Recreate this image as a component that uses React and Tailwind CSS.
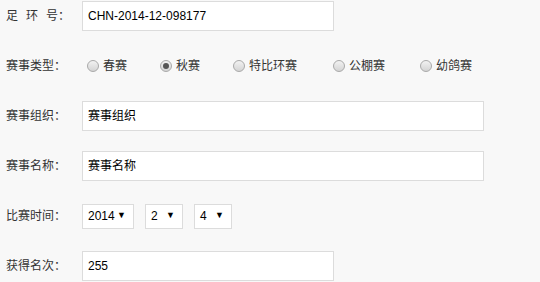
import React from 'react';

const font = { fontFamily: '"Liberation Sans", "Noto Sans CJK SC", sans-serif' };

function Label({ children }) {
  return <div className="w-[82px] shrink-0 pl-[6px] text-[12px] text-[#333]">{children}</div>;
}

function Radio({ checked, label }) {
  return (
    <label className="flex items-center mr-[28px]">
      <span className="ml-[5px] mr-[4px] flex h-[12px] w-[12px] items-center justify-center rounded-full border border-[#a9a9a9] bg-gradient-to-b from-[#f2f2f2] to-[#d4d4d4]">
        {checked && <span className="h-[6px] w-[6px] rounded-full bg-[#555]" />}
      </span>
      <span className="text-[12px] text-[#333]">{label}</span>
    </label>
  );
}

function Select({ value, width }) {
  return (
    <div className={`flex h-[25px] items-center justify-between border border-[#dcdcdc] bg-white pl-[5px] pr-[7px] text-[12px] text-black ${width}`}>
      <span>{value}</span>
      <span className="text-[9px]">▼</span>
    </div>
  );
}

export default function App() {
  return (
    <div className="h-[282px] w-[540px] overflow-hidden bg-[#f8f8f8] pt-[1px]" style={font}>
      {/* 足环号 */}
      <div className="mb-[20px] flex h-[30px] items-center">
        <Label>
          <span className="mr-[8px]">足</span>
          <span className="mr-[8px]">环</span>
          <span>号：</span>
        </Label>
        <div className="flex h-[30px] w-[252px] items-center border border-[#dcdcdc] bg-white pl-[5px] text-[12px] text-black">
          CHN-2014-12-098177
        </div>
      </div>

      {/* 赛事类型 */}
      <div className="mb-[20px] flex h-[30px] items-center">
        <Label>赛事类型：</Label>
        <div className="flex items-center">
          <Radio label="春赛" />
          <Radio label="秋赛" checked />
          <span className="mr-[3px] flex"><Radio label="特比环赛" /></span>
          <span className="mr-[2px] flex"><Radio label="公棚赛" /></span>
          <Radio label="幼鸽赛" />
        </div>
      </div>

      {/* 赛事组织 */}
      <div className="mb-[20px] flex h-[30px] items-center">
        <Label>赛事组织：</Label>
        <div className="flex h-[30px] w-[402px] items-center border border-[#dcdcdc] bg-white pl-[5px] text-[12px] text-black">
          赛事组织
        </div>
      </div>

      {/* 赛事名称 */}
      <div className="mb-[20px] flex h-[30px] items-center">
        <Label>赛事名称：</Label>
        <div className="flex h-[30px] w-[402px] items-center border border-[#dcdcdc] bg-white pl-[5px] text-[12px] text-black">
          赛事名称
        </div>
      </div>

      {/* 比赛时间 */}
      <div className="mb-[20px] flex h-[30px] items-center">
        <Label>比赛时间：</Label>
        <div className="flex items-center gap-[11px]">
          <Select value="2014" width="w-[52px]" />
          <Select value="2" width="w-[38px]" />
          <Select value="4" width="w-[38px]" />
        </div>
      </div>

      {/* 获得名次 */}
      <div className="flex h-[30px] items-center">
        <Label>获得名次：</Label>
        <div className="flex h-[30px] w-[252px] items-center border border-[#dcdcdc] bg-white pl-[5px] text-[12px] text-black">
          255
        </div>
      </div>
    </div>
  );
}
